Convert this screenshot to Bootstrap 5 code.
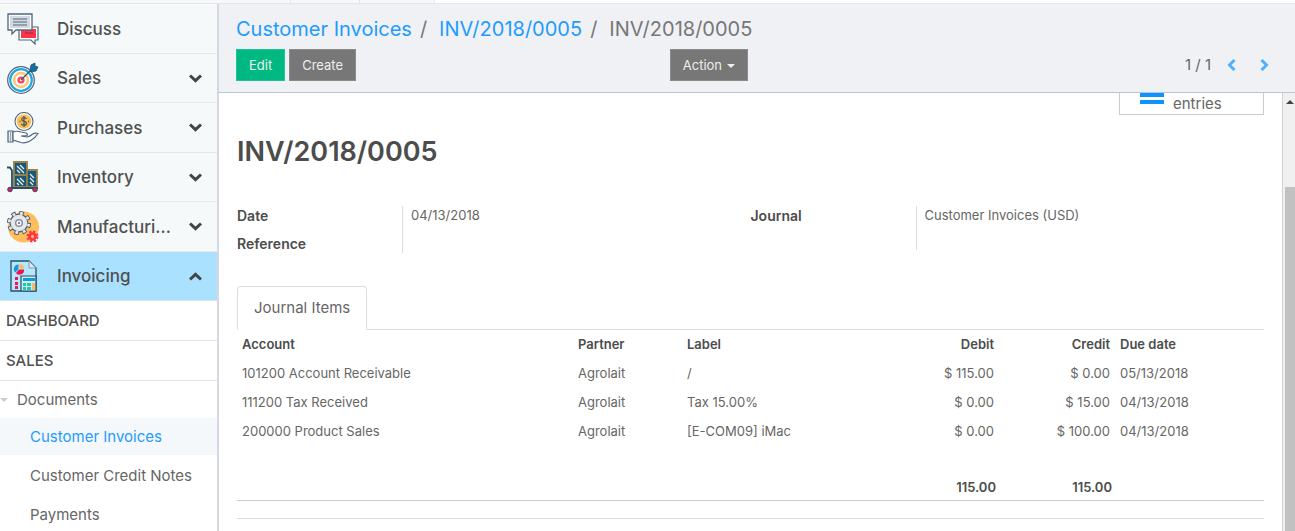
<!DOCTYPE html>
<html lang="en">
<head>
<meta charset="utf-8">
<meta name="viewport" content="width=device-width, initial-scale=1">
<title>INV/2018/0005 - Odoo</title>
<link href="https://cdn.jsdelivr.net/npm/bootstrap@5.3.0/dist/css/bootstrap.min.css" rel="stylesheet">
<style>
  body { font-family: Inter, "Open Sans", sans-serif; font-size: 13px; line-height: 20px; color: #666; background: #fff; }
  a { color: #1e9cff; text-decoration: none; }
  .top-strip { height: 4px; border-bottom: 1px solid #e6e7ea; }
  .top-strip span { background: #f6f8f9; border-right: 1px solid #e2e4e8; }
  .strip-a { width: 291px; } .strip-b { width: 69px; } .strip-c { width: 75px; }

  .side-menu { width: 219px; border-right: 2px solid #d7d7e4; }
  .app-link { height: 49px; padding: 0 15px 0 7px; background: #f5f9fa; border-bottom: 1px solid #e6e8ea; color: #505050; font-size: 17px; font-weight: 500; line-height: 24px; }
  .app-link:nth-child(odd) { height: 50px; }
  .app-link.active { background: #aae1ff; border-color: #d9e6ee; }
  .app-icon { width: 32px; height: 32px; margin-right: 18px; }
  .chev { width: 13px; height: 9px; fill: none; stroke: #444; stroke-width: 3; }
  .section-link { height: 40px; padding-left: 6px; border-bottom: 1px solid #e6e6e6; color: #505050; font-size: 15px; font-weight: 500; }
  .group-link { height: 37px; color: #666; font-size: 15px; }
  .caret-shape { border-left: 4px solid transparent; border-right: 4px solid transparent; border-top: 4px solid #ccc; margin-right: 9px; }
  .sub-link { height: 39px; padding-left: 30px; color: #666; font-size: 15px; }
  .sub-link.active { height: 37px; margin-bottom: 1px; background: #f4f8fa; color: #1e9cff; }

  .control-bar { height: 89px; padding: 12px 18px 0 17px; background: #f0f1f5; border-bottom: 1px solid #b9c4dd; }
  .crumbs { font-size: 20px; line-height: 26px; color: #777; }
  .crumb-sep { padding: 0 12px 0 8px; }
  .action-row { padding-top: 7px; }
  .btn-flat { border-radius: 0; height: 32px; padding: 0 12px; font-size: 13px; line-height: 30px; color: #eee; background: #777; border: 1px solid #8b8b8b; }
  .btn-flat.edit { background: #00b982; border-color: #1fc494; }
  .btn-flat.dropdown-toggle::after { border-width: 4px 4px 0; margin-left: 5px; vertical-align: 2px; }
  .pager { font-size: 15px; }
  .btn-pager { padding: 0; border: 0; background: none; line-height: 1; }
  .btn-pager svg { width: 9px; height: 12px; fill: none; stroke: #4fb0fb; stroke-width: 3; display: block; }

  .sheet { padding: 0 18px; }
  .stat-btn { width: 145px; height: 22px; border: 1px solid #ccc; border-top: 0; background: #fff; color: #666; padding: 0 20px; font-size: 15px; line-height: 20px; }
  .stat-btn svg { width: 24px; height: 21px; margin-right: 9px; fill: #0d92ff; }
  .record-title { margin: 21px 0 38px; font-size: 27px; line-height: 32px; font-weight: 600; color: #4c4c4c; }
  .fields dt { width: 165px; font-size: 14px; font-weight: 600; color: #4c4c4c; line-height: 19px; }
  .fields dd { margin: 0; padding-left: 8px; border-left: 1px solid #ddd; line-height: 19px; }
  .fields .first dt { padding-bottom: 9px; }
  .sheet-tabs { margin-top: 33px; border-bottom: 1px solid #ddd; }
  .sheet-tabs .nav-link { height: 44px; padding: 0 16px; color: #666; font-size: 15px; border-radius: 4px 4px 0 0; }
  .sheet-tabs .nav-link.active { color: #666; border-color: #ddd #ddd #fff; }
  .items { table-layout: fixed; width: 100%; border-bottom: 1px solid #ccc; }
  .items th, .items td { height: 29px; padding: 0 5px; vertical-align: middle; }
  .items th { height: 28px; font-weight: 600; color: #4c4c4c; }
  .items tfoot td { height: 26px; font-weight: 600; color: #4c4c4c; padding-right: 3px; }
  .c-account { width: 336px; } .c-partner { width: 109px; } .c-num { width: 116px; } .c-due { width: 149px; }
  .end-line { margin-top: 17px; border-top: 1px solid #ddd; }

  .scroll-rail { width: 13px; background: #f0f0f0; border-left: 1px solid #d0d0dc; padding-left: 2px; }
  .rail-arrow { margin: 7px 0 0 1px; width: 0; border-left: 4px solid transparent; border-right: 4px solid transparent; border-bottom: 4px solid #444; }
  .rail-thumb { margin-top: 83px; background: #c1c1c1; }
</style>
</head>
<body>
<div class="vh-100 d-flex flex-column overflow-hidden">
  <div class="top-strip d-flex flex-shrink-0"><span class="strip-a"></span><span class="strip-b"></span><span class="strip-c"></span></div>
  <div class="d-flex flex-grow-1 overflow-hidden">
    <nav class="side-menu flex-shrink-0 overflow-hidden" aria-label="Applications">
      <a href="#" class="app-link d-flex align-items-center">
        <svg class="app-icon" viewBox="0 0 32 32"><path d="M12 14h19v13h-3v4l-4-4H12z" fill="#fff" stroke="#4d6880" stroke-width="1.2"/><path d="M14 16h15v9H14z" fill="#ff3347"/><path d="M18 20h8" stroke="#b92b44" stroke-width="1.4"/><path d="M1 1h24v16H9l-4 4v-4H1z" fill="#fff" stroke="#4d6880" stroke-width="1.3"/><path d="M3 3h20v12H3z" fill="#d4d9df"/><path d="M6 6h14M6 9h14M6 12h14" stroke="#4d6880" stroke-width="1.2"/></svg>
        <span>Discuss</span></a>
      <a href="#" class="app-link d-flex align-items-center">
        <svg class="app-icon" viewBox="0 0 32 32"><circle cx="14" cy="18" r="13.3" fill="#fff" stroke="#4d6880" stroke-width="1.3"/><circle cx="14" cy="18" r="10.8" fill="#fff" stroke="#22a7e0" stroke-width="2.2"/><circle cx="14" cy="18" r="7" fill="#fff" stroke="#ffc773" stroke-width="2.4"/><circle cx="14" cy="18" r="3.6" fill="#ff3f59"/><circle cx="14" cy="18" r="1.3" fill="#fff"/><path d="M14 18L26 6" stroke="#38546d" stroke-width="1.3"/><path d="M23 8l1-5 4-2v3l3 1-2 4-5 1z" fill="#126ca5" stroke="#27516f" stroke-width=".8"/></svg>
        <span>Sales</span><svg class="chev ms-auto" viewBox="0 0 13 9"><path d="M1 1.500l5.500 5.200L12 1.500"/></svg></a>
      <a href="#" class="app-link d-flex align-items-center">
        <svg class="app-icon" viewBox="0 0 32 32"><circle cx="17" cy="9.500" r="9" fill="#fff" stroke="#4d6880" stroke-width="1.100"/><circle cx="17" cy="9.500" r="7.300" fill="#ffbd55"/><path d="M19.500 7q-1-1.500-2.800-1.300-2 .2-2 1.800 0 1.400 2.300 1.900 2.500.5 2.500 2.100 0 1.700-2.300 1.800-2 0-3-1.400M17 4v11M12.500 9.500h1M21 9.500h1" fill="none" stroke="#4d5b58" stroke-width="1.300"/><path d="M1 19h5v11H1z" fill="#e3e7eb" stroke="#4d6880" stroke-width="1.200"/><path d="M6 20q4-1.500 8 0l5 1q2 .7 1 2.500l-6 .5 6 1q3-.5 5-2.500 3-2 6-1-3 5-8 7.500-5 2.500-9 1.500L6 28z" fill="#fff" stroke="#4d6880" stroke-width="1.200"/><path d="M3.500 20v9" stroke="#9baab7"/></svg>
        <span>Purchases</span><svg class="chev ms-auto" viewBox="0 0 13 9"><path d="M1 1.500l5.500 5.200L12 1.500"/></svg></a>
      <a href="#" class="app-link d-flex align-items-center">
        <svg class="app-icon" viewBox="0 0 32 32"><path d="M7 1h13v13H7zM7 14h13v12H7zM20 9h10v17H20z" fill="#1c5876" stroke="#94834d" stroke-width="1.800"/><path d="M10 5l7 7M13 4l4 4M10 9l3 3M10 18l6 6M13 17l4 4M10 22l2 2M23 13l4 4M23 17l4 4M23 21l3 3" stroke="#e7edf0" stroke-width="1.300"/><path d="M0 6.500h3l2 3V27h26" fill="none" stroke="#234f6c" stroke-width="1.800"/><circle cx="3" cy="28.500" r="2.300" fill="#ed174f" stroke="#234f6c"/><circle cx="28" cy="28.500" r="2.300" fill="#ed174f" stroke="#234f6c"/></svg>
        <span>Inventory</span><svg class="chev ms-auto" viewBox="0 0 13 9"><path d="M1 1.500l5.500 5.200L12 1.500"/></svg></a>
      <a href="#" class="app-link d-flex align-items-center">
        <svg class="app-icon" viewBox="0 0 32 32"><circle cx="16.500" cy="16" r="15.500" fill="#ffbd5b"/><circle cx="12" cy="12" r="9.800" fill="none" stroke="#4d5f70" stroke-width="4.600" stroke-dasharray="4.300 3.397"/><circle cx="12" cy="12" r="8.900" fill="#e4e7eb" stroke="#4d5f70" stroke-width="1.200"/><circle cx="12" cy="12" r="9.800" fill="none" stroke="#e4e7eb" stroke-width="2.800" stroke-dasharray="2.700 4.997" stroke-dashoffset="-.8"/><circle cx="12" cy="12" r="3.300" fill="#fff" stroke="#8391a0" stroke-width="1.500"/><circle cx="12" cy="12" r="1.100" fill="#5b6d7e"/><circle cx="25.500" cy="25.500" r="4.800" fill="none" stroke="#ff3347" stroke-width="2.500" stroke-dasharray="2.200 1.570"/><circle cx="25.500" cy="25.500" r="3" fill="#ffbd5b" stroke="#ff3347" stroke-width="2.600"/></svg>
        <span>Manufacturi...</span><svg class="chev ms-auto" viewBox="0 0 13 9"><path d="M1 1.500l5.500 5.200L12 1.500"/></svg></a>
      <a href="#" class="app-link active d-flex align-items-center">
        <svg class="app-icon" viewBox="0 0 32 32"><path d="M4 1h18l7 7v23H4z" fill="#b7e6fd" stroke="#234f6c" stroke-width="1.300"/><path d="M22 1v7h7z" fill="#dfe7ec" stroke="#6d8fa5" stroke-width=".8"/><path d="M11.500 4.500v4.500l-3 3.500a4.500 4.500 0 0 1 3-8z" fill="#109bd8"/><path d="M12.500 8.500v-4.500a4.500 4.500 0 0 1 4.500 4.500z" fill="#ffb95b"/><path d="M12 9.500h5a4.500 4.500 0 0 1-8 3.500z" fill="#ed174f"/><path d="M14 16h15v15H14z" fill="#cbeef5" stroke="#234f6c" stroke-width="1.200"/><path d="M16 18h12v3H16z" fill="#139bd7"/><path d="M16 23h3v3h-3zM20 23h4v3h-4zM16 27h3v3h-3zM20 27h4v3h-4z" fill="#27c8a0"/><path d="M25 23h3v7h-3z" fill="#ffb95b"/><path d="M8 17h3v3H8zM8 22h3v3H8zM8 26h3v3H8z" fill="#ed174f"/></svg>
        <span>Invoicing</span><svg class="chev ms-auto" viewBox="0 0 13 9"><path d="M1 7.500l5.500-5.200L12 7.500"/></svg></a>
      <a href="#" class="section-link d-flex align-items-center">DASHBOARD</a>
      <a href="#" class="section-link d-flex align-items-center">SALES</a>
      <a href="#" class="group-link d-flex align-items-center"><span class="caret-shape"></span>Documents</a>
      <a href="#" class="sub-link active d-flex align-items-center">Customer Invoices</a>
      <a href="#" class="sub-link d-flex align-items-center">Customer Credit Notes</a>
      <a href="#" class="sub-link d-flex align-items-center">Payments</a>
    </nav>
    <main class="flex-grow-1 d-flex flex-column overflow-hidden">
      <header class="control-bar flex-shrink-0">
        <div class="crumbs d-flex"><a href="#">Customer Invoices</a><span class="crumb-sep">/</span><a href="#">INV/2018/0005</a><span class="crumb-sep">/</span><span>INV/2018/0005</span></div>
        <div class="action-row row g-0 align-items-center">
          <div class="col-5 d-flex gap-1"><button type="button" class="btn btn-flat edit">Edit</button><button type="button" class="btn btn-flat">Create</button></div>
          <div class="col-2"><button type="button" class="btn btn-flat dropdown-toggle">Action</button></div>
          <div class="pager col-5 d-flex justify-content-end align-items-center pe-2"><span class="me-3">1 / 1</span><button type="button" class="btn btn-pager me-4" aria-label="Previous"><svg viewBox="0 0 9 12"><path d="M7.500 1L2.500 6l5 5"/></svg></button><button type="button" class="btn btn-pager" aria-label="Next"><svg viewBox="0 0 9 12"><path d="M1.500 1l5 5-5 5"/></svg></button></div>
        </div>
      </header>
      <div class="d-flex flex-grow-1 overflow-hidden">
        <section class="sheet flex-grow-1 overflow-hidden">
          <div class="d-flex justify-content-end">
            <button type="button" class="stat-btn d-flex align-items-center"><svg viewBox="0 0 24 21"><path d="M0 0h24v4H0zM0 7h24v4H0z"/></svg><span>entries</span></button>
          </div>
          <h1 class="record-title">INV/2018/0005</h1>
          <div class="row g-0 fields">
            <dl class="col-6 mb-0"><div class="d-flex first"><dt>Date</dt><dd>04/13/2018</dd></div><div class="d-flex"><dt>Reference</dt><dd></dd></div></dl>
            <dl class="col-6 mb-0"><div class="d-flex first"><dt>Journal</dt><dd>Customer Invoices (USD)</dd></div><div class="d-flex"><dt></dt><dd class="pt-3"></dd></div></dl>
          </div>
          <ul class="nav nav-tabs sheet-tabs"><li class="nav-item"><a href="#" class="nav-link active d-flex align-items-center">Journal Items</a></li></ul>
          <table class="items">
            <colgroup><col class="c-account"><col class="c-partner"><col><col class="c-num"><col class="c-num"><col class="c-due"></colgroup>
            <thead><tr><th>Account</th><th>Partner</th><th>Label</th><th class="text-end">Debit</th><th class="text-end">Credit</th><th>Due date</th></tr></thead>
            <tbody>
              <tr><td>101200 Account Receivable</td><td>Agrolait</td><td>/</td><td class="text-end">$ 115.00</td><td class="text-end">$ 0.00</td><td>05/13/2018</td></tr>
              <tr><td>111200 Tax Received</td><td>Agrolait</td><td>Tax 15.00%</td><td class="text-end">$ 0.00</td><td class="text-end">$ 15.00</td><td>04/13/2018</td></tr>
              <tr><td>200000 Product Sales</td><td>Agrolait</td><td>[E-COM09] iMac</td><td class="text-end">$ 0.00</td><td class="text-end">$ 100.00</td><td>04/13/2018</td></tr>
              <tr><td colspan="6"></td></tr>
            </tbody>
            <tfoot><tr><td></td><td></td><td></td><td class="text-end">115.00</td><td class="text-end">115.00</td><td></td></tr></tfoot>
          </table>
          <div class="end-line"></div>
        </section>
        <div class="scroll-rail flex-shrink-0 d-flex flex-column" aria-hidden="true"><div class="rail-arrow"></div><div class="rail-thumb flex-grow-1"></div></div>
      </div>
    </main>
  </div>
</div>
<script src="https://cdn.jsdelivr.net/npm/bootstrap@5.3.0/dist/js/bootstrap.bundle.min.js"></script>
</body>
</html>
